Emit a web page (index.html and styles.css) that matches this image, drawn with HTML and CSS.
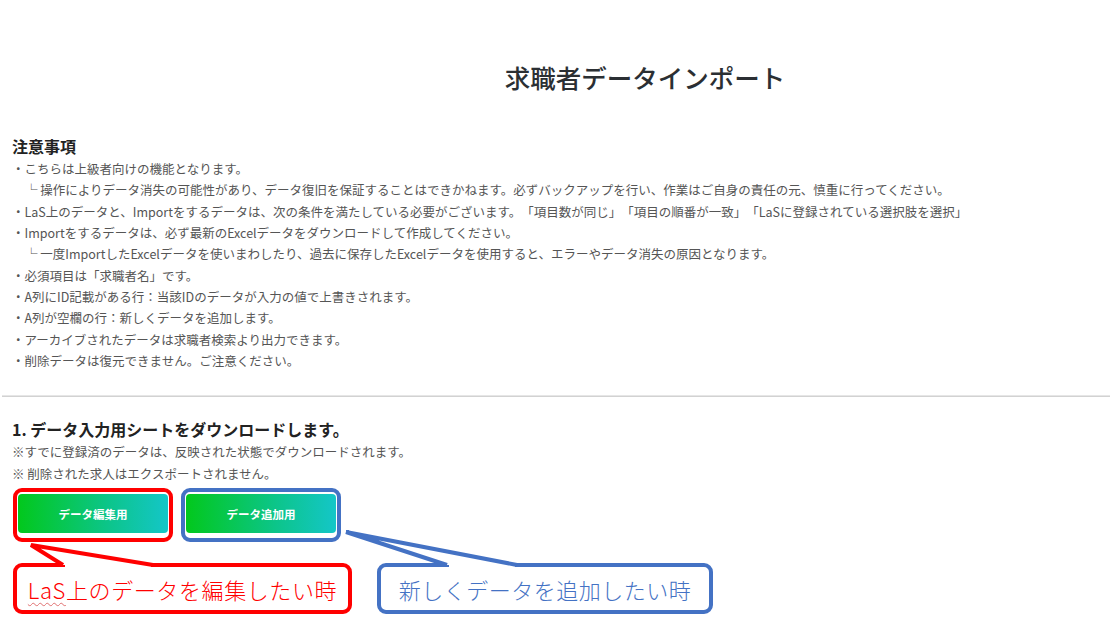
FILE: index.html
```html
<!DOCTYPE html>
<html>
<head>
    <meta charset="utf-8">
    <title>求職者データインポート</title>
    <link rel="stylesheet" href="styles.css">
</head>
<body>
<div class="page">

    <h1 class="title">求職者データインポート</h1>

    <section class="notes">
        <h2 class="heading">注意事項</h2>
        <ul class="note-list">
            <li>・こちらは上級者向けの機能となります。</li>
            <li class="sub">└ 操作によりデータ消失の可能性があり、データ復旧を保証することはできかねます。必ずバックアップを行い、作業はご自身の責任の元、慎重に行ってください。</li>
            <li>・LaS上のデータと、Importをするデータは、次の条件を満たしている必要がございます。「項目数が同じ」「項目の順番が一致」「LaSに登録されている選択肢を選択」</li>
            <li>・Importをするデータは、必ず最新のExcelデータをダウンロードして作成してください。</li>
            <li class="sub">└ 一度ImportしたExcelデータを使いまわしたり、過去に保存したExcelデータを使用すると、エラーやデータ消失の原因となります。</li>
            <li>・必須項目は「求職者名」です。</li>
            <li>・A列にID記載がある行：当該IDのデータが入力の値で上書きされます。</li>
            <li>・A列が空欄の行：新しくデータを追加します。</li>
            <li>・アーカイブされたデータは求職者検索より出力できます。</li>
            <li>・削除データは復元できません。ご注意ください。</li>
        </ul>
    </section>

    <hr class="divider">

    <section class="download">
        <h2 class="heading">1. データ入力用シートをダウンロードします。</h2>
        <p class="note">※すでに登録済のデータは、反映された状態でダウンロードされます。</p>
        <p class="note">※ 削除された求人はエクスポートされません。</p>

        <div class="btn-row">
            <div class="frame frame-red"><button class="btn">データ編集用</button></div>
            <div class="frame frame-blue"><button class="btn">データ追加用</button></div>
        </div>

        <!-- annotation callouts -->
        <div class="callouts">
            <div class="callout callout-red">
                <svg class="tail" width="240" height="50" viewBox="0 0 240 50">
                    <rect x="92" y="38" width="86" height="8" fill="#fff"/>
                    <polyline points="90,42 58,22 180,42" fill="#fff" stroke="#ff0000" stroke-width="4" stroke-linejoin="miter"/>
                </svg>
                <span class="label"><span class="spell">LaS</span>上のデータを編集したい時</span>
            </div>
            <div class="callout callout-blue">
                <svg class="tail" width="240" height="50" viewBox="0 0 240 50">
                    <rect x="112" y="38" width="66" height="8" fill="#fff"/>
                    <polyline points="110,42 9,9 180,42" fill="#fff" stroke="#4472c4" stroke-width="4" stroke-linejoin="miter"/>
                </svg>
                <span class="label">新しくデータを追加したい時</span>
            </div>
        </div>
    </section>

</div>
</body>
</html>
```

FILE: styles.css
```css
body {
    margin: 0;
    background-color: #fff;
    color: #555;
    font-family: "Noto Sans CJK JP", "Noto Sans", sans-serif;
    text-spacing-trim: space-all;
}
.page {
    padding: 0 0 0 12px;
}
.title {
    margin: 0;
    padding: 58px 0 0 168px;
    text-align: center;
    font-size: 25.5px;
    font-weight: 500;
    line-height: 38px;
    color: #2b2f33;
}
.heading {
    margin: 0;
    font-size: 16px;
    font-weight: 700;
    line-height: 24px;
    color: #222;
}
.notes {
    margin-top: 38px;
}
.note-list {
    list-style: none;
    margin: 0;
    padding: 0;
}
.note-list li,
.note {
    font-size: 12.5px;
    line-height: 21.35px;
    color: #555;
}
.note-list li.sub {
    padding-left: 13px;
}
.divider {
    margin: 24px 0 20px -10px;
    border: none;
    border-top: 1px solid #e6e6e6;
    border-bottom: 1px solid #d2d2d2;
    height: 0;
}
.note {
    margin: 0;
}

/* buttons */
.btn-row {
    display: flex;
    gap: 8px;
    margin: 4px 0 0 1px;
}
.frame {
    border: 4px solid;
    border-radius: 9px;
    padding: 2px 1px 5px 1px;
}
.frame-red {
    border-color: #ff0000;
}
.frame-blue {
    border-color: #4472c4;
}
.btn {
    display: block;
    width: 150px;
    height: 39px;
    border: none;
    border-radius: 4px;
    background: linear-gradient(90deg, #02c81c 0%, #0cc58a 60%, #14c6c8 100%);
    color: #fff;
    font-family: inherit;
    font-size: 11.5px;
    font-weight: 700;
    cursor: pointer;
}

/* callouts */
.callouts {
    display: flex;
    gap: 25px;
    margin: 21px 0 0 1px;
}
.callout {
    position: relative;
    box-sizing: border-box;
    height: 51px;
    border: 4px solid;
    border-radius: 9px;
    background-color: #fff;
    display: flex;
    align-items: center;
    justify-content: center;
    font-size: 22px;
    font-weight: 300;
}
.callout-red {
    width: 339px;
    border-color: #ff0000;
    color: #ff0000;
    letter-spacing: 0.6px;
}
.callout-blue {
    width: 336px;
    border-color: #4472c4;
    color: #4472c4;
    letter-spacing: 0.5px;
}
.tail {
    position: absolute;
    left: -44px;
    top: -44px;
    overflow: visible;
}
.label {
    position: relative;
}
.spell {
    text-decoration: underline wavy #e07070 1px;
    text-underline-offset: 3px;
}
```
